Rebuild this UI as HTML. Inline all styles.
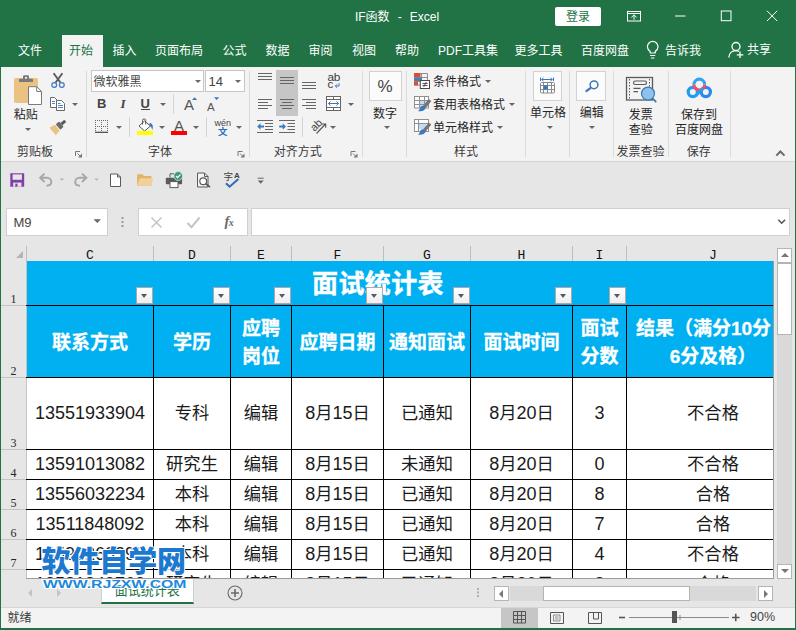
<!DOCTYPE html>
<html lang="zh-CN">
<head>
<meta charset="utf-8">
<title>IF函数 - Excel</title>
<style>
*{box-sizing:border-box;margin:0;padding:0}
html,body{width:796px;height:630px;overflow:hidden}
body{position:relative;background:#e6e6e6;font-family:"Liberation Sans","Noto Sans CJK SC",sans-serif;font-size:12px;color:#262626}
.abs{position:absolute}
#win{position:absolute;left:0;top:0;width:796px;height:630px;border:1px solid #217346;pointer-events:none}
#win:before{content:"";position:absolute;left:793.500px;top:0;width:1.500px;height:630px;background:#217346}
#win:after{content:"";position:absolute;left:0;top:627.400px;width:796px;height:1.600px;background:#217346}
#titlebar{position:absolute;left:0;top:0;width:796px;height:66.700px;background:#217346}
#title{position:absolute;left:0;width:796px;top:8px;text-align:center;color:#fff;font-size:12px;word-spacing:.7px;line-height:18px;white-space:pre;padding-right:2px}
.tab{position:absolute;top:42px;color:#fff;font-size:12px;line-height:18px;white-space:nowrap}
#tabhome{position:absolute;left:62px;top:35px;width:41px;height:33px;background:#f3f3f3}
#ribbon{position:absolute;left:1px;top:66.700px;width:794px;height:94.900px;background:#f3f3f3;border-bottom:1px solid #d4d4d4}
.gsep{position:absolute;top:71px;width:1px;height:86px;background:#dadada}
.glabel{position:absolute;top:143.900px;font-size:12px;line-height:16px;color:#3a3a3a;white-space:nowrap;text-align:center}
.rt{position:absolute;font-size:12px;line-height:16px;color:#262626;white-space:nowrap}
.dd{position:absolute;width:0;height:0;border-left:3px solid transparent;border-right:3px solid transparent;border-top:3px solid #666}
svg{position:absolute;overflow:visible}
.ch{position:absolute;top:0;height:17px;text-align:center;font-family:"Liberation Mono",monospace;font-size:13px;line-height:24px;color:#111}
.chs{position:absolute;top:2px;width:1px;height:15px;background:#bdbdbd}
.rh{position:absolute;left:0;width:25px;border-bottom:1px solid #c4c4c4;font-family:"Liberation Serif",serif;font-size:12px;color:#262626;text-align:center}
.rh span{position:absolute;left:0;width:25px;bottom:-1px;line-height:14px}
.ttl{position:absolute;text-align:center;color:#fff;font-weight:bold;font-size:26px;letter-spacing:.4px;line-height:36px;white-space:nowrap;-webkit-text-stroke:.4px #fff}
.hc{position:absolute;display:flex;align-items:center;justify-content:center;text-align:center;color:#fff;font-weight:bold;font-size:19px;line-height:28px;white-space:nowrap;-webkit-text-stroke:.3px #fff;padding-top:2px}
.dc{position:absolute;text-align:center;font-size:18px;color:#1a1a1a;white-space:nowrap}
.cj{font-size:17.300px}
.vl{position:absolute;width:1px;height:400px;background:#000}
.hl{position:absolute;width:760px;height:1px;background:#000}
.fb{position:absolute;width:16.500px;height:16.500px;background:linear-gradient(#fff,#eceef2);border:1px solid #b0a8a8}
.fb i{position:absolute;left:3.500px;top:6px;width:0;height:0;border-left:3.800px solid transparent;border-right:3.800px solid transparent;border-top:4px solid #5a5a5a}
.sbtn{position:absolute;background:#fff;border:1px solid #b4b4b4}
.sbtn i{position:absolute;width:0;height:0}
.sbtn i.up{left:2.500px;top:4px;border-left:4px solid transparent;border-right:4px solid transparent;border-bottom:4.500px solid #777}
.sbtn i.down{left:2.500px;top:4px;border-left:4px solid transparent;border-right:4px solid transparent;border-top:4.500px solid #777}
.sbtn i.left{left:3.500px;top:2.500px;border-top:4px solid transparent;border-bottom:4px solid transparent;border-right:4.500px solid #777}
.sbtn i.right{left:5px;top:2.500px;border-top:4px solid transparent;border-bottom:4px solid transparent;border-left:4.500px solid #777}
.wm1{font-family:"Liberation Sans","Noto Sans CJK SC",sans-serif;font-weight:900;font-size:29px;line-height:40px;color:#1c79cf;white-space:nowrap;letter-spacing:-.1px;-webkit-text-stroke:2px #fff;paint-order:stroke fill}
.wm2{font-family:"Liberation Sans",sans-serif;font-weight:bold;font-size:10.500px;line-height:16px;color:#2088dc;white-space:nowrap;transform-origin:0 0;transform:scaleX(1.50);-webkit-text-stroke:2px #fff;paint-order:stroke fill}
</style>
</head>
<body>
<div id="titlebar"></div>
<div id="title">IF函数  -  Excel</div>
<div id="tabhome"></div>
<div id="ribbon"></div>
<div class="tab" style="left:18px">文件</div>
<div class="tab" style="left:69px;color:#217346">开始</div>
<div class="tab" style="left:112.5px">插入</div>
<div class="tab" style="left:155px">页面布局</div>
<div class="tab" style="left:222.5px">公式</div>
<div class="tab" style="left:265.5px">数据</div>
<div class="tab" style="left:308.5px">审阅</div>
<div class="tab" style="left:352px">视图</div>
<div class="tab" style="left:395px">帮助</div>
<div class="tab" style="left:438px">PDF工具集</div>
<div class="tab" style="left:514.5px">更多工具</div>
<div class="tab" style="left:581px">百度网盘</div>
<div class="tab" style="left:665px">告诉我</div>
<div class="tab" style="left:747px;top:40.500px">共享</div>
<div class="abs" style="left:555px;top:7px;width:46px;height:18.500px;background:#fff;border-radius:2px;color:#217346;font-size:12px;line-height:20px;text-align:center">登录</div>
<svg style="left:0;top:0" width="796" height="66" viewBox="0 0 796 66" fill="none" stroke="#fff" stroke-width="1">
<rect x="627.500" y="11.500" width="13" height="9.500"/><path d="M627.500 13.500h13M634 19.700v-4.500M631.300 17.500l2.700-2.700l2.700 2.700"/>
<path d="M675 16h10.500"/>
<rect x="721.300" y="11" width="9.700" height="9.700"/>
<path d="M767 10.800l10.200 10.200M777.200 10.800l-10.200 10.200"/>
<g stroke-width="1.200"><path d="M650.200 53v-1.500c-1.700-1.300-2.800-2.800-2.800-4.800a5.300 5.300 0 0 1 10.600 0c0 2-1.100 3.500-2.800 4.800v1.500z"/><path d="M650.200 55.500h5M651 58h3.400"/></g>
<g stroke-width="1.300"><circle cx="736" cy="46.500" r="4"/><path d="M728.800 57.500c.3-4.200 3.200-6.800 7-6.800c1.300 0 2.300.3 3.200.8"/><path d="M740 51.500v6.500M736.800 54.800h6.500"/></g>
</svg>

<div class="gsep" style="left:86px"></div>
<div class="gsep" style="left:249px"></div>
<div class="gsep" style="left:362px"></div>
<div class="gsep" style="left:406px"></div>
<div class="gsep" style="left:525px"></div>
<div class="gsep" style="left:569px"></div>
<div class="gsep" style="left:613px"></div>
<div class="gsep" style="left:668px"></div>
<div class="gsep" style="left:730px"></div>
<div class="glabel" style="left:7px;width:56px">剪贴板</div>
<div class="glabel" style="left:138px;width:44px">字体</div>
<div class="glabel" style="left:263.5px;width:68.5px">对齐方式</div>
<div class="glabel" style="left:444px;width:44px">样式</div>
<div class="glabel" style="left:607px;width:67px">发票查验</div>
<div class="glabel" style="left:676.5px;width:44.5px">保存</div>
<div class="rt" style="left:3.8000000000000007px;top:106.8px;width:44px;text-align:center">粘贴</div>
<div class="rt" style="left:363px;top:106.2px;width:44px;text-align:center">数字</div>
<div class="rt" style="left:520px;top:105.2px;width:56px;text-align:center">单元格</div>
<div class="rt" style="left:569.6px;top:105.2px;width:44.4px;text-align:center">编辑</div>
<div class="rt" style="left:618.7px;top:106.8px;width:44.3px;text-align:center">发票</div>
<div class="rt" style="left:618.7px;top:121.8px;width:44.3px;text-align:center">查验</div>
<div class="rt" style="left:671px;top:106.8px;width:56px;text-align:center">保存到</div>
<div class="rt" style="left:665px;top:121.8px;width:68px;text-align:center">百度网盘</div>
<div class="rt" style="left:433px;top:74.0px">条件格式</div>
<div class="rt" style="left:433px;top:97.3px">套用表格格式</div>
<div class="rt" style="left:433px;top:119.9px">单元格样式</div>
<div class="abs" style="left:91px;top:70px;width:113px;height:22px;background:#fff;border:1px solid #c6c6c6"></div>
<div class="rt" style="left:93.500px;top:74px;color:#444">微软雅黑</div>
<div class="abs" style="left:205px;top:70px;width:40px;height:22px;background:#fff;border:1px solid #c6c6c6"></div>
<div class="rt" style="left:208.500px;top:74px;color:#444;font-size:13px;letter-spacing:0">14</div>
<div class="abs" style="left:276px;top:70px;width:21.500px;height:46px;background:#c6c6c6"></div>
<div class="abs" style="left:369px;top:70.500px;width:32.5px;height:30px;background:#fbfbfb;border:1px solid #d2d2d2"></div>
<div class="abs" style="left:532.5px;top:70.500px;width:29.5px;height:30px;background:#fbfbfb;border:1px solid #d2d2d2"></div>
<div class="abs" style="left:576px;top:70.500px;width:29.5px;height:30px;background:#fbfbfb;border:1px solid #d2d2d2"></div>
<div class="rt" style="left:97px;top:96px;font-weight:bold;font-size:13px;color:#444;letter-spacing:0">B</div>
<div class="rt" style="left:120.500px;top:96px;font-style:italic;font-family:'Liberation Serif',serif;font-weight:bold;font-size:13px;color:#444;letter-spacing:0">I</div>
<div class="rt" style="left:140.500px;top:96px;font-size:13px;font-weight:bold;color:#444;letter-spacing:0">U</div>
<div class="abs" style="left:141px;top:108.800px;width:9px;height:1px;background:#444"></div>
<div class="rt" style="left:376px;top:77.200px;font-size:17px;line-height:20px;color:#444;width:18px;text-align:center;letter-spacing:0">%</div>
<div class="dd" style="left:25px;top:128px"></div>
<div class="dd" style="left:72px;top:102.8px"></div>
<div class="dd" style="left:159.7px;top:102.8px"></div>
<div class="dd" style="left:116px;top:126px"></div>
<div class="dd" style="left:159px;top:126px"></div>
<div class="dd" style="left:193px;top:126px"></div>
<div class="dd" style="left:236px;top:126px"></div>
<div class="dd" style="left:348px;top:102.8px"></div>
<div class="dd" style="left:330px;top:126px"></div>
<div class="dd" style="left:384px;top:126px"></div>
<div class="dd" style="left:485px;top:80px"></div>
<div class="dd" style="left:509px;top:103.3px"></div>
<div class="dd" style="left:497px;top:126px"></div>
<div class="dd" style="left:547px;top:126px"></div>
<div class="dd" style="left:589px;top:126px"></div>
<div class="dd" style="left:195px;top:80px"></div>
<div class="dd" style="left:235px;top:80px"></div>
<div class="abs" style="left:173px;top:94px;width:1px;height:20px;background:#d4d4d4"></div>
<div class="abs" style="left:129px;top:117px;width:1px;height:20px;background:#d4d4d4"></div>
<div class="abs" style="left:206px;top:117px;width:1px;height:20px;background:#d4d4d4"></div>
<div class="abs" style="left:302px;top:117px;width:1px;height:20px;background:#d4d4d4"></div>
<svg style="left:0;top:0" width="796" height="162" viewBox="0 0 796 162" fill="none" stroke-linecap="butt">
<!-- paste -->
<rect x="14" y="78" width="24" height="25" rx="2" fill="#eac282"/>
<path d="M19 82v-2.200a1 1 0 0 1 1-1h3v-2.300a1.200 1.200 0 0 1 1.200-1.200h3.600a1.200 1.200 0 0 1 1.200 1.200v2.300h3a1 1 0 0 1 1 1v2.200z" fill="#7a7a7a"/>
<rect x="25" y="77" width="2" height="1.600" fill="#f3f3f3"/>
<path d="M28.500 86.700h8.300l4.700 4.700v13.100h-13z" fill="#fff" stroke="#7a7a7a" stroke-width="1"/>
<path d="M36.700 86.700v4.800h4.800" stroke="#7a7a7a" stroke-width="1"/>
<!-- scissors -->
<path d="M53.600 73.300l6.800 9.200M62.400 73.300l-6.800 9.200" stroke="#5a5a5a" stroke-width="1.900"/>
<circle cx="54.200" cy="85" r="2.400" stroke="#3c78c0" stroke-width="1.200"/><circle cx="61.800" cy="85" r="2.400" stroke="#3c78c0" stroke-width="1.200"/>
<!-- copy -->
<path d="M50.500 97.500h4l2.500 2.500v7.500h-6.500z" fill="#fff" stroke="#6a6a6a"/>
<path d="M56.500 100.500h5l3 3v7h-8z" fill="#fff" stroke="#6a6a6a"/>
<path d="M52 101.500h3M52 103.500h3M58 105.500h5M58 107.500h5M58 103.500h2.500" stroke="#3c78c0" stroke-width=".9"/>
<!-- format painter -->
<g transform="translate(58 127) rotate(-40)"><rect x="4.500" y="-1.500" width="5" height="3" fill="#5a5a5a"/><rect x="0" y="-3.500" width="4.500" height="7" rx=".8" fill="#6a6a6a"/><path d="M-1-3.800l-6-1.200v10l6-1.200z" fill="#eac282"/></g>
<!-- font grow/shrink -->
<path d="M192 100l2.600-2.800l2.600 2.800z" fill="#3c78c0"/><path d="M214 97.200h5.200l-2.600 2.800z" fill="#3c78c0"/>
<!-- borders -->
<g stroke="#6a6a6a" stroke-width="1" stroke-dasharray="1 1"><path d="M95 120.500h13M95 126.500h13M95.500 122v10M101.500 122v10M107.500 122v10"/></g>
<path d="M95 132.300h13" stroke="#444" stroke-width="1.200"/>
<!-- fill bucket -->
<path d="M144.600 121l5.800 5l-5.800 5l-5.600-5z" fill="#fff" stroke="#5a5a5a" stroke-width="1"/>
<path d="M142.500 124.500v-4a1.600 1.600 0 0 1 3.200 0v4" stroke="#5a5a5a" stroke-width="1"/>
<path d="M149.800 122.800c2.800 1 4 3.800 2.400 7.200c-.3-2.200-1.300-3.600-3-4.800z" fill="#3c78c0"/>
<rect x="137" y="131" width="16" height="4" fill="#ffff00"/>
<!-- font color -->
<rect x="171" y="131" width="16" height="4" fill="#ff0000"/>
<!-- align top/middle/bottom -->
<g stroke="#666" stroke-width="1">
<path d="M258 73.500h14M258 76.500h14M258 79.500h14"/>
<path d="M280 77.500h14M280 80.500h14M280 83.500h14"/>
<path d="M302 82.500h14M302 85.500h14M302 88.500h14"/>
<path d="M258 99.500h14M258 102.500h10M258 105.500h14M258 108.500h10"/>
<path d="M280 99.500h14M282 102.500h10M280 105.500h14M282 108.500h10"/>
<path d="M302 99.500h14M306 102.500h10M302 105.500h14M306 108.500h10"/>
<path d="M257 120.500h16M265 123.500h8M265 126.500h8M265 129.500h8M257 132.500h16"/>
<path d="M279 120.500h16M287.500 123.500h7.500M287.500 126.500h7.500M287.500 129.500h7.500M279 132.500h16"/>
</g>
<path d="M257.200 126.500l3.300-3.300v2.300h3.500v2h-3.500v2.300z" fill="#3c78c0"/>
<path d="M286 126.500l-3.300-3.300v2.300h-3.500v2h3.500v2.300z" fill="#3c78c0"/>
<!-- wrap arrow -->
<path d="M339 83.200v2.800h-3.500M337 84.300l-1.700 1.700l1.700 1.700" stroke="#3c78c0" stroke-width="1"/>
<!-- merge -->
<g stroke="#666" stroke-width="1"><rect x="326.500" y="96.500" width="14" height="14" fill="#fff"/><path d="M326.500 99.500h14M326.500 107.500h14M333.500 96.500v3M333.500 107.500v3"/></g>
<path d="M328.500 103.500h10M330.500 101.500l-2 2l2 2M336.500 101.500l2 2l-2 2" stroke="#3c78c0" stroke-width="1"/>
<!-- orientation arrow -->
<path d="M316.500 133.500l9-9.500M322 124h3.700v3.700" stroke="#555" stroke-width="1.100"/>
<!-- cond format -->
<g stroke="#909090" stroke-width="1"><path d="M414.500 73.500h13v11.500h-13zM414.500 77.500h13M414.500 81.500h13M421.500 73.500v11.500"/></g>
<rect x="414" y="73" width="6.500" height="4" fill="#d8502c"/><rect x="414" y="77.500" width="8" height="3.500" fill="#4a7ebb"/><rect x="414" y="81.500" width="4" height="4" fill="#d8502c"/>
<rect x="420.300" y="80.500" width="9.200" height="8" fill="#fff" stroke="#4a4a4a" stroke-width="1"/>
<path d="M422.500 83.500h5M422.500 85.500h5M426.300 82l-2.600 5" stroke="#444" stroke-width=".9"/>
<!-- table format -->
<g><rect x="414.500" y="96.500" width="14" height="11.500" fill="#fff" stroke="#909090"/><rect x="419" y="101" width="9" height="6.500" fill="#c4dcf2"/><path d="M414.500 100.500h14M414.500 104.500h14M419.500 96.500v11.500M424.500 96.500v11.500" stroke="#909090" stroke-width="1"/>
<path d="M430 100l-5.600 7" stroke="#757575" stroke-width="3.400"/><path d="M424.600 106.200c-1.800-1.100-4-.3-4.600 1.700c-.3 1.300-.9 2.300-2 3.100c3.200.9 6.800-.2 7.800-3.200z" fill="#3c78c0"/></g>
<!-- cell styles -->
<g><rect x="414.500" y="119.500" width="14" height="12" fill="#fff" stroke="#909090"/><rect x="418" y="123" width="8" height="6" fill="#c4dcf2"/><path d="M414.500 123.500h14M418.500 119.500v12" stroke="#909090" stroke-width="1"/>
<path d="M430 123.500l-5.600 7" stroke="#757575" stroke-width="3.400"/><path d="M424.600 129.700c-1.800-1.100-4-.3-4.600 1.700c-.3 1.300-.9 2.300-2 3.100c3.200.9 6.800-.2 7.800-3.200z" fill="#3c78c0"/></g>
<!-- cells icon -->
<path d="M540.500 77.500v3.500M553.500 77.500v3.500M541.500 79.500h11M543.500 77.800l-1.800 1.700l1.800 1.700M550.500 77.800l1.800 1.700l-1.800 1.700" stroke="#3c78c0" stroke-width="1"/>
<g stroke="#8a8a8a" stroke-width="1"><rect x="540.500" y="82.500" width="14" height="10.500" rx="1" fill="#fff"/><path d="M540.500 85.500h14M540.500 89.500h14M543.500 82.500v10.500M547.500 82.500v10.500M551.500 82.500v10.500"/></g>
<rect x="543.500" y="85.500" width="4.500" height="4" fill="#3c78c0"/>
<!-- find -->
<circle cx="594" cy="84.800" r="3.900" stroke="#3e78b8" stroke-width="1.500"/><path d="M591 87.700l-5.300 4" stroke="#3e78b8" stroke-width="2.200"/>
<!-- invoice -->
<rect x="626.500" y="77.500" width="26" height="22.500" stroke="#5a5a5a" stroke-width="1.300"/>
<path d="M629.500 79v20M649.500 79v20" stroke="#5a5a5a" stroke-width="1" stroke-dasharray="1.500 1.500"/>
<rect x="633.500" y="81" width="13" height="3.500" rx="1.700" stroke="#5a5a5a" stroke-width="1.100"/>
<path d="M633.500 88.300h7M633.500 91.600h4.500" stroke="#5a5a5a" stroke-width="1.200"/>
<circle cx="648" cy="93.600" r="6.500" fill="#8fc1ee" stroke="#3a78b0" stroke-width="1.200"/><path d="M652.800 98.500l3.400 3.600" stroke="#3a78b0" stroke-width="1.800"/>
<!-- baidu -->
<circle cx="692.800" cy="92" r="4.600" stroke="#1e9cf2" stroke-width="3.200"/><circle cx="705.800" cy="92" r="4.600" stroke="#2a86f0" stroke-width="3.200"/>
<path d="M693.900 84.600a5.400 5.400 0 0 1 10.800 0" stroke="#2fa4f2" stroke-width="3.200"/><path d="M693.900 84.600a5.400 5.400 0 0 0 10.800 0" stroke="#f0506e" stroke-width="3.200"/>
<path d="M696 95.500l7-7" stroke="#22a0f2" stroke-width="3"/>
<!-- launchers -->
<g transform="translate(0 0)"><path d="M75.500 156v-4.500h4.500M77.500 153.500l3 3" stroke="#777" stroke-width="1"/><path d="M82 153.500v4h-4z" fill="#777"/></g>
<g transform="translate(162.5 0)"><path d="M75.500 156v-4.500h4.500M77.500 153.500l3 3" stroke="#777" stroke-width="1"/><path d="M82 153.500v4h-4z" fill="#777"/></g>
<g transform="translate(275.5 0)"><path d="M75.500 156v-4.500h4.500M77.500 153.500l3 3" stroke="#777" stroke-width="1"/><path d="M82 153.500v4h-4z" fill="#777"/></g>
<!-- collapse -->
<path d="M776.300 155.600l4.100-4.100l4.100 4.100" stroke="#6a6a6a" stroke-width="2"/>
</svg>
<div class="rt" style="left:184px;top:96.700px;font-size:15px;color:#555;letter-spacing:0">A</div>
<div class="rt" style="left:207px;top:98.500px;font-size:11.500px;color:#555;letter-spacing:0">A</div>
<div class="rt" style="left:174px;top:117.800px;font-size:15px;color:#555;letter-spacing:0">A</div>
<div class="rt" style="left:214.500px;top:115px;font-size:9px;color:#444;letter-spacing:0">wén</div>
<div class="rt" style="left:218px;top:123.500px;font-size:9.500px;font-weight:bold;color:#2b6cb8;letter-spacing:0">文</div>
<div class="rt" style="left:327.500px;top:69.300px;font-size:11.800px;color:#3a3a3a;letter-spacing:-.4px">ab</div>
<div class="rt" style="left:327.500px;top:75.700px;font-size:11.500px;color:#3a3a3a;letter-spacing:0">c</div>
<div class="rt" style="left:309.500px;top:116.500px;font-size:11px;color:#444;letter-spacing:-.3px;transform:rotate(-45deg);transform-origin:50% 50%">ab</div>

<div class="abs" style="left:6px;top:208px;width:102px;height:28px;background:#fff;border:1px solid #d0d0d0"></div>
<div class="abs" style="left:13.500px;top:214px;font-size:13px;line-height:18px;color:#444">M9</div>
<div class="abs" style="left:138px;top:208px;width:110px;height:28px;background:#fff;border:1px solid #d0d0d0"></div>
<div class="abs" style="left:251px;top:208px;width:539px;height:28px;background:#fff;border:1px solid #d0d0d0"></div>
<div class="abs" style="left:224.500px;top:212px;font-family:'Liberation Serif',serif;font-style:italic;font-weight:bold;font-size:14.500px;line-height:18px;color:#6a6a6a;letter-spacing:-.5px">f<span style="font-size:10px">x</span></div>
<svg style="left:0;top:0" width="796" height="240" viewBox="0 0 796 240" fill="none">
<!-- save -->
<path d="M10.300 173.200h13.900v13.500h-13.900z" fill="#8040a8"/>
<rect x="12.600" y="174.400" width="9.300" height="5.400" fill="#e6e6e6"/>
<rect x="13.200" y="182.600" width="8.200" height="4.100" fill="#e6e6e6"/><rect x="15.300" y="183.600" width="2.200" height="3.100" fill="#8040a8"/>
<!-- undo / redo -->
<g stroke="#a8a8a8" stroke-width="2" stroke-linejoin="miter">
<path d="M44.500 173.600l-4.300 4.200l4.300 4.200"/><path d="M40.500 177.800h6.500a4.300 4.300 0 0 1 4.300 4.300c0 2.400-1.700 3.600-4.800 3.600"/>
<path d="M82 173.600l4.300 4.200l-4.300 4.200"/><path d="M86 177.800h-6.500a4.300 4.300 0 0 0-4.300 4.300c0 2.400 1.700 3.600 4.800 3.600"/>
</g>
<path d="M59.600 178.400h4.600l-2.300 2.400zM94.200 178.400h4.600l-2.300 2.400z" fill="#b4b4b4"/>
<!-- new -->
<path d="M110.500 174h7l3 3v9.500h-10z" fill="#fff" stroke="#5a5a5a" stroke-width="1"/><path d="M117.500 174v3h3" stroke="#5a5a5a" stroke-width="1"/>
<!-- open -->
<path d="M137 175.200a1 1 0 0 1 1-1h4.500l1.500 1.800h6.500a1 1 0 0 1 1 1v8.500h-14.500z" fill="#e2b368"/>
<path d="M139.700 178.200h13.600l-2.200 7.300h-14.100z" fill="#f1d09a"/>
<!-- quick print -->
<path d="M170 177.500v-3.700h4" stroke="#5a5a5a" stroke-width="1"/>
<rect x="165.800" y="177.700" width="16.300" height="6.500" rx="1" fill="#5a5a5a"/>
<rect x="170" y="181.600" width="8" height="6" fill="#fff" stroke="#5a5a5a" stroke-width="1"/>
<circle cx="178.200" cy="176" r="4.400" fill="#3a9a6e" stroke="#e6e6e6" stroke-width=".8"/><path d="M176 176l1.600 1.700l2.900-3.300" stroke="#fff" stroke-width="1.200"/>
<!-- preview -->
<path d="M197.500 173h7l3.500 3.500v10.500h-10.500z" fill="#f3f3f3" stroke="#5a5a5a" stroke-width="1"/><path d="M204.500 173v3.500h3.500" stroke="#5a5a5a" stroke-width="1"/>
<circle cx="203.200" cy="181.200" r="3.400" fill="#fff" stroke="#5a5a5a" stroke-width="1.200"/><path d="M205.800 183.800l4.200 3.300" stroke="#5a5a5a" stroke-width="1.800"/>
<!-- spelling check -->
<path d="M226 183.200l3.600 3.500l8.800-7.800" stroke="#3468b4" stroke-width="2"/>
<!-- customize -->
<path d="M257.700 178.200h6" stroke="#666" stroke-width="1"/><path d="M257.700 180.500h6l-3 3.200z" fill="#666"/>
<!-- name box arrow / dots / x check / expand -->
<path d="M93.500 219.200h7.500l-3.750 3.800z" fill="#666"/>
<rect x="121.500" y="217" width="2" height="2" fill="#9a9a9a"/><rect x="121.500" y="221" width="2" height="2" fill="#9a9a9a"/><rect x="121.500" y="225" width="2" height="2" fill="#9a9a9a"/>
<path d="M151.500 217.500l10 10M161.500 217.500l-10 10" stroke="#c4c4c4" stroke-width="1.500"/>
<path d="M187.500 223l4 4.200l8-9.700" stroke="#c4c4c4" stroke-width="2"/>
<path d="M778.300 219.800l3.400 3.400l3.400-3.400" stroke="#555" stroke-width="1.600"/>
</svg>
<div class="abs" style="left:223.500px;top:170.500px;font-size:9.500px;line-height:12px;color:#444">字</div>
<div class="abs" style="left:234px;top:170.300px;font-size:8px;font-weight:bold;line-height:12px;color:#444">A</div>

<div id="sheet" class="abs" style="left:1px;top:244px;width:773px;height:335px;overflow:hidden;background:#e6e6e6">
<div class="abs" style="left:14.500px;top:6.500px;width:0;height:0;border-left:7.500px solid transparent;border-bottom:7.500px solid #b4b4b4"></div>
<div class="ch" style="left:25.5px;width:127.0px">C</div>
<div class="chs" style="left:25.0px"></div>
<div class="ch" style="left:152.5px;width:77.0px">D</div>
<div class="chs" style="left:152.0px"></div>
<div class="ch" style="left:229.5px;width:61.0px">E</div>
<div class="chs" style="left:229.0px"></div>
<div class="ch" style="left:290.5px;width:92.0px">F</div>
<div class="chs" style="left:290.0px"></div>
<div class="ch" style="left:382.5px;width:87.0px">G</div>
<div class="chs" style="left:382.0px"></div>
<div class="ch" style="left:469.5px;width:102.0px">H</div>
<div class="chs" style="left:469.0px"></div>
<div class="ch" style="left:571.5px;width:54.0px">I</div>
<div class="chs" style="left:571.0px"></div>
<div class="ch" style="left:625.5px;width:173.0px">J</div>
<div class="chs" style="left:625.0px"></div>
<div class="abs" style="left:25px;top:16.500px;width:760px;height:1px;background:#bdbdbd"></div>
<div class="rh" style="top:17.5px;height:44.0px"><span>1</span></div>
<div class="rh" style="top:61.5px;height:72.0px"><span>2</span></div>
<div class="rh" style="top:133.5px;height:72.0px"><span>3</span></div>
<div class="rh" style="top:205.5px;height:30.0px"><span>4</span></div>
<div class="rh" style="top:235.5px;height:30.0px"><span>5</span></div>
<div class="rh" style="top:265.5px;height:30.0px"><span>6</span></div>
<div class="rh" style="top:295.5px;height:30.0px"><span>7</span></div>
<div class="rh" style="top:325.5px;height:30.0px"><span>8</span></div>
<div class="abs" style="left:25px;top:17px;width:760px;height:330px;background:#fff"></div>
<div class="abs" style="left:25px;top:17px;width:760px;height:116px;background:#00b0f0"></div>
<div class="ttl" style="left:25.5px;top:21.69999999999999px;width:703px">面试统计表</div>
<div class="hc" style="left:25.5px;top:61.5px;width:127.0px;height:72px"><div>联系方式</div></div>
<div class="hc" style="left:152.5px;top:61.5px;width:77.0px;height:72px"><div>学历</div></div>
<div class="hc" style="left:229.5px;top:61.5px;width:61.0px;height:72px"><div>应聘<br>岗位</div></div>
<div class="hc" style="left:290.5px;top:61.5px;width:92.0px;height:72px"><div>应聘日期</div></div>
<div class="hc" style="left:382.5px;top:61.5px;width:87.0px;height:72px"><div>通知面试</div></div>
<div class="hc" style="left:469.5px;top:61.5px;width:102.0px;height:72px"><div>面试时间</div></div>
<div class="hc" style="left:571.5px;top:61.5px;width:54.0px;height:72px"><div>面试<br>分数</div></div>
<div class="hc" style="left:625.5px;top:61.5px;width:173.0px;height:72px"><div>结果（满分10分，<br>6分及格）</div></div>
<div class="dc" style="left:25.5px;top:133.5px;width:127.0px;height:72.0px;line-height:71.0px">13551933904</div>
<div class="dc" style="left:152.5px;top:133.5px;width:77.0px;height:72.0px;line-height:71.0px"><span class="cj">专科</span></div>
<div class="dc" style="left:229.5px;top:133.5px;width:61.0px;height:72.0px;line-height:71.0px"><span class="cj">编辑</span></div>
<div class="dc" style="left:290.5px;top:133.5px;width:92.0px;height:72.0px;line-height:71.0px">8<span class="cj">月</span>15<span class="cj">日</span></div>
<div class="dc" style="left:382.5px;top:133.5px;width:87.0px;height:72.0px;line-height:71.0px"><span class="cj">已通知</span></div>
<div class="dc" style="left:469.5px;top:133.5px;width:102.0px;height:72.0px;line-height:71.0px">8<span class="cj">月</span>20<span class="cj">日</span></div>
<div class="dc" style="left:571.5px;top:133.5px;width:54.0px;height:72.0px;line-height:71.0px">3</div>
<div class="dc" style="left:625.5px;top:133.5px;width:173.0px;height:72.0px;line-height:71.0px"><span class="cj">不合格</span></div>
<div class="dc" style="left:25.5px;top:205.5px;width:127.0px;height:30.0px;line-height:29.0px">13591013082</div>
<div class="dc" style="left:152.5px;top:205.5px;width:77.0px;height:30.0px;line-height:29.0px"><span class="cj">研究生</span></div>
<div class="dc" style="left:229.5px;top:205.5px;width:61.0px;height:30.0px;line-height:29.0px"><span class="cj">编辑</span></div>
<div class="dc" style="left:290.5px;top:205.5px;width:92.0px;height:30.0px;line-height:29.0px">8<span class="cj">月</span>15<span class="cj">日</span></div>
<div class="dc" style="left:382.5px;top:205.5px;width:87.0px;height:30.0px;line-height:29.0px"><span class="cj">未通知</span></div>
<div class="dc" style="left:469.5px;top:205.5px;width:102.0px;height:30.0px;line-height:29.0px">8<span class="cj">月</span>20<span class="cj">日</span></div>
<div class="dc" style="left:571.5px;top:205.5px;width:54.0px;height:30.0px;line-height:29.0px">0</div>
<div class="dc" style="left:625.5px;top:205.5px;width:173.0px;height:30.0px;line-height:29.0px"><span class="cj">不合格</span></div>
<div class="dc" style="left:25.5px;top:235.5px;width:127.0px;height:30.0px;line-height:29.0px">13556032234</div>
<div class="dc" style="left:152.5px;top:235.5px;width:77.0px;height:30.0px;line-height:29.0px"><span class="cj">本科</span></div>
<div class="dc" style="left:229.5px;top:235.5px;width:61.0px;height:30.0px;line-height:29.0px"><span class="cj">编辑</span></div>
<div class="dc" style="left:290.5px;top:235.5px;width:92.0px;height:30.0px;line-height:29.0px">8<span class="cj">月</span>15<span class="cj">日</span></div>
<div class="dc" style="left:382.5px;top:235.5px;width:87.0px;height:30.0px;line-height:29.0px"><span class="cj">已通知</span></div>
<div class="dc" style="left:469.5px;top:235.5px;width:102.0px;height:30.0px;line-height:29.0px">8<span class="cj">月</span>20<span class="cj">日</span></div>
<div class="dc" style="left:571.5px;top:235.5px;width:54.0px;height:30.0px;line-height:29.0px">8</div>
<div class="dc" style="left:625.5px;top:235.5px;width:173.0px;height:30.0px;line-height:29.0px"><span class="cj">合格</span></div>
<div class="dc" style="left:25.5px;top:265.5px;width:127.0px;height:30.0px;line-height:29.0px">13511848092</div>
<div class="dc" style="left:152.5px;top:265.5px;width:77.0px;height:30.0px;line-height:29.0px"><span class="cj">本科</span></div>
<div class="dc" style="left:229.5px;top:265.5px;width:61.0px;height:30.0px;line-height:29.0px"><span class="cj">编辑</span></div>
<div class="dc" style="left:290.5px;top:265.5px;width:92.0px;height:30.0px;line-height:29.0px">8<span class="cj">月</span>15<span class="cj">日</span></div>
<div class="dc" style="left:382.5px;top:265.5px;width:87.0px;height:30.0px;line-height:29.0px"><span class="cj">已通知</span></div>
<div class="dc" style="left:469.5px;top:265.5px;width:102.0px;height:30.0px;line-height:29.0px">8<span class="cj">月</span>20<span class="cj">日</span></div>
<div class="dc" style="left:571.5px;top:265.5px;width:54.0px;height:30.0px;line-height:29.0px">7</div>
<div class="dc" style="left:625.5px;top:265.5px;width:173.0px;height:30.0px;line-height:29.0px"><span class="cj">合格</span></div>
<div class="dc" style="left:25.5px;top:295.5px;width:127.0px;height:30.0px;line-height:29.0px">13598263398</div>
<div class="dc" style="left:152.5px;top:295.5px;width:77.0px;height:30.0px;line-height:29.0px"><span class="cj">本科</span></div>
<div class="dc" style="left:229.5px;top:295.5px;width:61.0px;height:30.0px;line-height:29.0px"><span class="cj">编辑</span></div>
<div class="dc" style="left:290.5px;top:295.5px;width:92.0px;height:30.0px;line-height:29.0px">8<span class="cj">月</span>15<span class="cj">日</span></div>
<div class="dc" style="left:382.5px;top:295.5px;width:87.0px;height:30.0px;line-height:29.0px"><span class="cj">已通知</span></div>
<div class="dc" style="left:469.5px;top:295.5px;width:102.0px;height:30.0px;line-height:29.0px">8<span class="cj">月</span>20<span class="cj">日</span></div>
<div class="dc" style="left:571.5px;top:295.5px;width:54.0px;height:30.0px;line-height:29.0px">4</div>
<div class="dc" style="left:625.5px;top:295.5px;width:173.0px;height:30.0px;line-height:29.0px"><span class="cj">不合格</span></div>
<div class="dc" style="left:25.5px;top:325.5px;width:127.0px;height:30.0px;line-height:29.0px">13581849763</div>
<div class="dc" style="left:152.5px;top:325.5px;width:77.0px;height:30.0px;line-height:29.0px"><span class="cj">研究生</span></div>
<div class="dc" style="left:229.5px;top:325.5px;width:61.0px;height:30.0px;line-height:29.0px"><span class="cj">编辑</span></div>
<div class="dc" style="left:290.5px;top:325.5px;width:92.0px;height:30.0px;line-height:29.0px">8<span class="cj">月</span>15<span class="cj">日</span></div>
<div class="dc" style="left:382.5px;top:325.5px;width:87.0px;height:30.0px;line-height:29.0px"><span class="cj">已通知</span></div>
<div class="dc" style="left:469.5px;top:325.5px;width:102.0px;height:30.0px;line-height:29.0px">8<span class="cj">月</span>20<span class="cj">日</span></div>
<div class="dc" style="left:571.5px;top:325.5px;width:54.0px;height:30.0px;line-height:29.0px">8</div>
<div class="dc" style="left:625.5px;top:325.5px;width:173.0px;height:30.0px;line-height:29.0px"><span class="cj">合格</span></div>
<div class="abs" style="left:25px;top:17px;width:1px;height:320px;background:#c4c4c4"></div>
<div class="vl" style="left:152.0px;top:61px"></div>
<div class="vl" style="left:229.0px;top:61px"></div>
<div class="vl" style="left:290.0px;top:61px"></div>
<div class="vl" style="left:382.0px;top:61px"></div>
<div class="vl" style="left:469.0px;top:61px"></div>
<div class="vl" style="left:571.0px;top:61px"></div>
<div class="vl" style="left:625.0px;top:61px"></div>
<div class="hl" style="left:25px;top:61.0px"></div>
<div class="hl" style="left:25px;top:133.0px"></div>
<div class="hl" style="left:25px;top:205.0px"></div>
<div class="hl" style="left:25px;top:235.0px"></div>
<div class="hl" style="left:25px;top:265.0px"></div>
<div class="hl" style="left:25px;top:295.0px"></div>
<div class="hl" style="left:25px;top:325.0px"></div>
<div class="abs" style="left:772px;top:17px;width:1px;height:318px;background:#9c9c9c"></div>
<div class="abs" style="left:25px;top:334px;width:748px;height:1px;background:#9c9c9c"></div>
<div class="fb" style="left:135.2px;top:43.19999999999999px"><i></i></div>
<div class="fb" style="left:212.2px;top:43.19999999999999px"><i></i></div>
<div class="fb" style="left:273.2px;top:43.19999999999999px"><i></i></div>
<div class="fb" style="left:365.2px;top:43.19999999999999px"><i></i></div>
<div class="fb" style="left:452.2px;top:43.19999999999999px"><i></i></div>
<div class="fb" style="left:554.2px;top:43.19999999999999px"><i></i></div>
<div class="fb" style="left:608.2px;top:43.19999999999999px"><i></i></div>
</div>
<div class="sbtn" style="left:777px;top:248px;width:15px;height:15px"><i class="up"></i></div>
<div class="sbtn" style="left:777px;top:263px;width:15px;height:72px"></div>
<div class="sbtn" style="left:777px;top:564px;width:15px;height:15px"><i class="down"></i></div>
<div class="abs" style="left:777px;top:335px;width:15px;height:229px;background:#d9d9d9"></div>
<div class="abs" style="left:1px;top:579px;width:794px;height:28px;background:#e6e6e6"></div>
<div class="abs" style="left:27.500px;top:588.500px;width:0;height:0;border-top:4px solid transparent;border-bottom:4px solid transparent;border-right:4.500px solid #c2c2c2"></div>
<div class="abs" style="left:56.500px;top:588.500px;width:0;height:0;border-top:4px solid transparent;border-bottom:4px solid transparent;border-left:4.500px solid #c2c2c2"></div>
<div class="abs" style="left:101px;top:579px;width:92.500px;height:24.500px;background:#fff;border-bottom:2px solid #217346;border-left:1px solid #d0d0d0;border-right:1px solid #d0d0d0;color:#217346;font-size:13px;line-height:24px;text-align:center">面试统计表</div>
<svg style="left:226px;top:584px" width="18" height="18" viewBox="0 0 18 18" fill="none" stroke="#6a6a6a" stroke-width="1.100"><circle cx="9" cy="9" r="7"/><path d="M9 5v8M5 9h8" stroke-width="1.600"/></svg>
<div class="abs" style="left:477px;top:588px;width:2px;height:2px;background:#b0b0b0;box-shadow:0 3.500px 0 #b0b0b0,0 7px 0 #b0b0b0"></div>
<div class="abs" style="left:510px;top:586px;width:246px;height:15px;background:#d9d9d9"></div>
<div class="sbtn" style="left:494px;top:586px;width:15px;height:15px"><i class="left"></i></div>
<div class="sbtn" style="left:758px;top:586px;width:15px;height:15px"><i class="right"></i></div>
<div class="sbtn" style="left:542.500px;top:586px;width:147.500px;height:15px"></div>
<div class="abs" style="left:1px;top:607px;width:794px;height:22px;background:#f3f3f3;border-top:1px solid #d6d6d6"></div>
<div class="abs" style="left:7.500px;top:609.500px;font-size:12px;line-height:16px;color:#3a3a3a">就绪</div>
<div class="abs" style="left:500.500px;top:608px;width:37px;height:21px;background:#c6c6c6"></div>
<svg style="left:0;top:600px" width="796" height="30" viewBox="0 600 796 30" fill="none" stroke="#555" stroke-width="1">
<path d="M513.500 611.500h12v11.500h-12zM513.500 615.500h12M513.500 619.500h12M517.500 611.500v11.500M521.500 611.500v11.500"/>
<path d="M550.500 612.500h13v11h-13z"/><path d="M553.500 615h6.500v6h-6.500zM555 617h3.500M555 619h3.500" stroke-width=".7" stroke="#666"/>
<path d="M588.500 612.500h13v11h-13zM593.500 612.500v6.500h5v-6.500" />
<path d="M619 617.500h6" stroke-width="1.600"/>
<path d="M629 617.500h100" stroke="#8a8a8a" stroke-width="1"/>
<path d="M680 615v5" stroke="#8a8a8a" stroke-width="1"/>
<rect x="672" y="611" width="5" height="12" fill="#555" stroke="none"/>
<path d="M732 617.500h7.500M735.750 613.700v7.600" stroke-width="1.600"/>
</svg>
<div class="abs" style="left:750px;top:609px;font-size:12.500px;line-height:16px;color:#444">90%</div>
<div class="abs wm1" style="left:41.500px;top:542px">软件自学网</div>
<div class="abs wm2" style="left:42.500px;top:576px">WWW.RJZXW.COM</div>

<div id="win"></div>
</body>
</html>
